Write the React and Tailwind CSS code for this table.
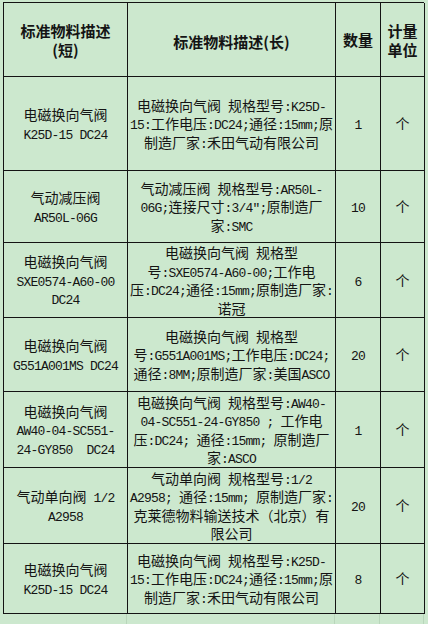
import React from "react";

const rows = [
    {
        h: "h-[94px]",
        short: ["电磁换向气阀", "K25D-15 DC24"],
        long: ["电磁换向气阀 规格型号:K25D-", "15:工作电压:DC24;通径:15mm;原", "制造厂家:禾田气动有限公司"],
        qty: "1",
    },
    {
        h: "h-[72px]",
        short: ["气动减压阀", "AR50L-06G"],
        long: ["气动减压阀 规格型号:AR50L-", "06G;连接尺寸:3/4\";原制造厂", "家:SMC"],
        qty: "10",
    },
    {
        h: "h-[75px]",
        short: ["电磁换向气阀", "SXE0574-A60-00", "DC24"],
        long: ["电磁换向气阀 规格型", "号:SXE0574-A60-00;工作电", "压:DC24;通径:15mm;原制造厂家:", "诺冠"],
        qty: "6",
    },
    {
        h: "h-[74px]",
        short: ["电磁换向气阀", "G551A001MS DC24"],
        long: ["电磁换向气阀 规格型", "号:G551A001MS;工作电压:DC24;", "通径:8MM;原制造厂家:美国ASCO"],
        qty: "20",
    },
    {
        h: "h-[76px]",
        short: ["电磁换向气阀", "AW40-04-SC551-", "24-GY850  DC24"],
        long: ["电磁换向气阀 规格型号:AW40-", "04-SC551-24-GY850 ; 工作电", "压:DC24; 通径:15mm; 原制造厂", "家:ASCO"],
        qty: "1",
    },
    {
        h: "h-[76px]",
        short: ["气动单向阀 1/2", "A2958"],
        long: ["气动单向阀 规格型号:1/2", "A2958; 通径:15mm; 原制造厂家:", "克莱德物料输送技术（北京）有", "限公司"],
        qty: "20",
    },
    {
        h: "h-[70px]",
        short: ["电磁换向气阀", "K25D-15 DC24"],
        long: ["电磁换向气阀 规格型号:K25D-", "15:工作电压:DC24;通径:15mm;原", "制造厂家:禾田气动有限公司"],
        qty: "8",
    },
];

// latin runs look like SimSun's half-width glyphs
function Line({ s }) {
    const parts = s.split(/([\x00-\x7F]+)/).filter(Boolean);
    return (
        <div className="whitespace-pre leading-[18.5px]">
            {parts.map((p, i) =>
                /^[\x00-\x7F]+$/.test(p) ? (
                    <span key={i} className="font-['Liberation_Mono',monospace] text-[13px] tracking-[-0.8px] leading-none">
                        {p}
                    </span>
                ) : (
                    <span key={i}>{p}</span>
                )
            )}
        </div>
    );
}

const cell = "border-r border-b border-[#141414] flex flex-col items-center justify-center text-center overflow-hidden";

export default function App() {
    return (
        <div className="w-[428px] h-[624px] overflow-hidden bg-[#cce8ce] text-[#141414] font-['Noto_Sans_CJK_SC',sans-serif] text-[14px] pt-[2px] pl-[3px]">
            <div className="w-[421px] border-l border-t border-[#141414]">
                <div className="grid grid-cols-[124px_208px_45px_44px] h-[74px] font-bold text-[15px] leading-[19px]">
                    <div className={cell}>
                        <div>标准物料描述</div>
                        <div>(短)</div>
                    </div>
                    <div className={cell + " pt-[4px]"}>标准物料描述(长)</div>
                    <div className={cell}>数量</div>
                    <div className={cell}>
                        <div>计量</div>
                        <div>单位</div>
                    </div>
                </div>
                {rows.map((r, i) => (
                    <div key={i} className={"grid grid-cols-[124px_208px_45px_44px] " + r.h}>
                        <div className={cell}>
                            {r.short.map((s, j) => (
                                <Line key={j} s={s} />
                            ))}
                        </div>
                        <div className={cell}>
                            {r.long.map((s, j) => (
                                <Line key={j} s={s} />
                            ))}
                        </div>
                        <div className={cell}>
                            <Line s={r.qty} />
                        </div>
                        <div className={cell}>个</div>
                    </div>
                ))}
            </div>
            <div className="grid grid-cols-[124px_208px_45px_44px] h-[20px] w-[421px]">
                <div className="border-r border-[#b9d6bb]"></div>
                <div className="border-r border-[#b9d6bb]"></div>
                <div className="border-r border-[#b9d6bb]"></div>
                <div className="border-r border-[#b9d6bb]"></div>
            </div>
        </div>
    );
}
